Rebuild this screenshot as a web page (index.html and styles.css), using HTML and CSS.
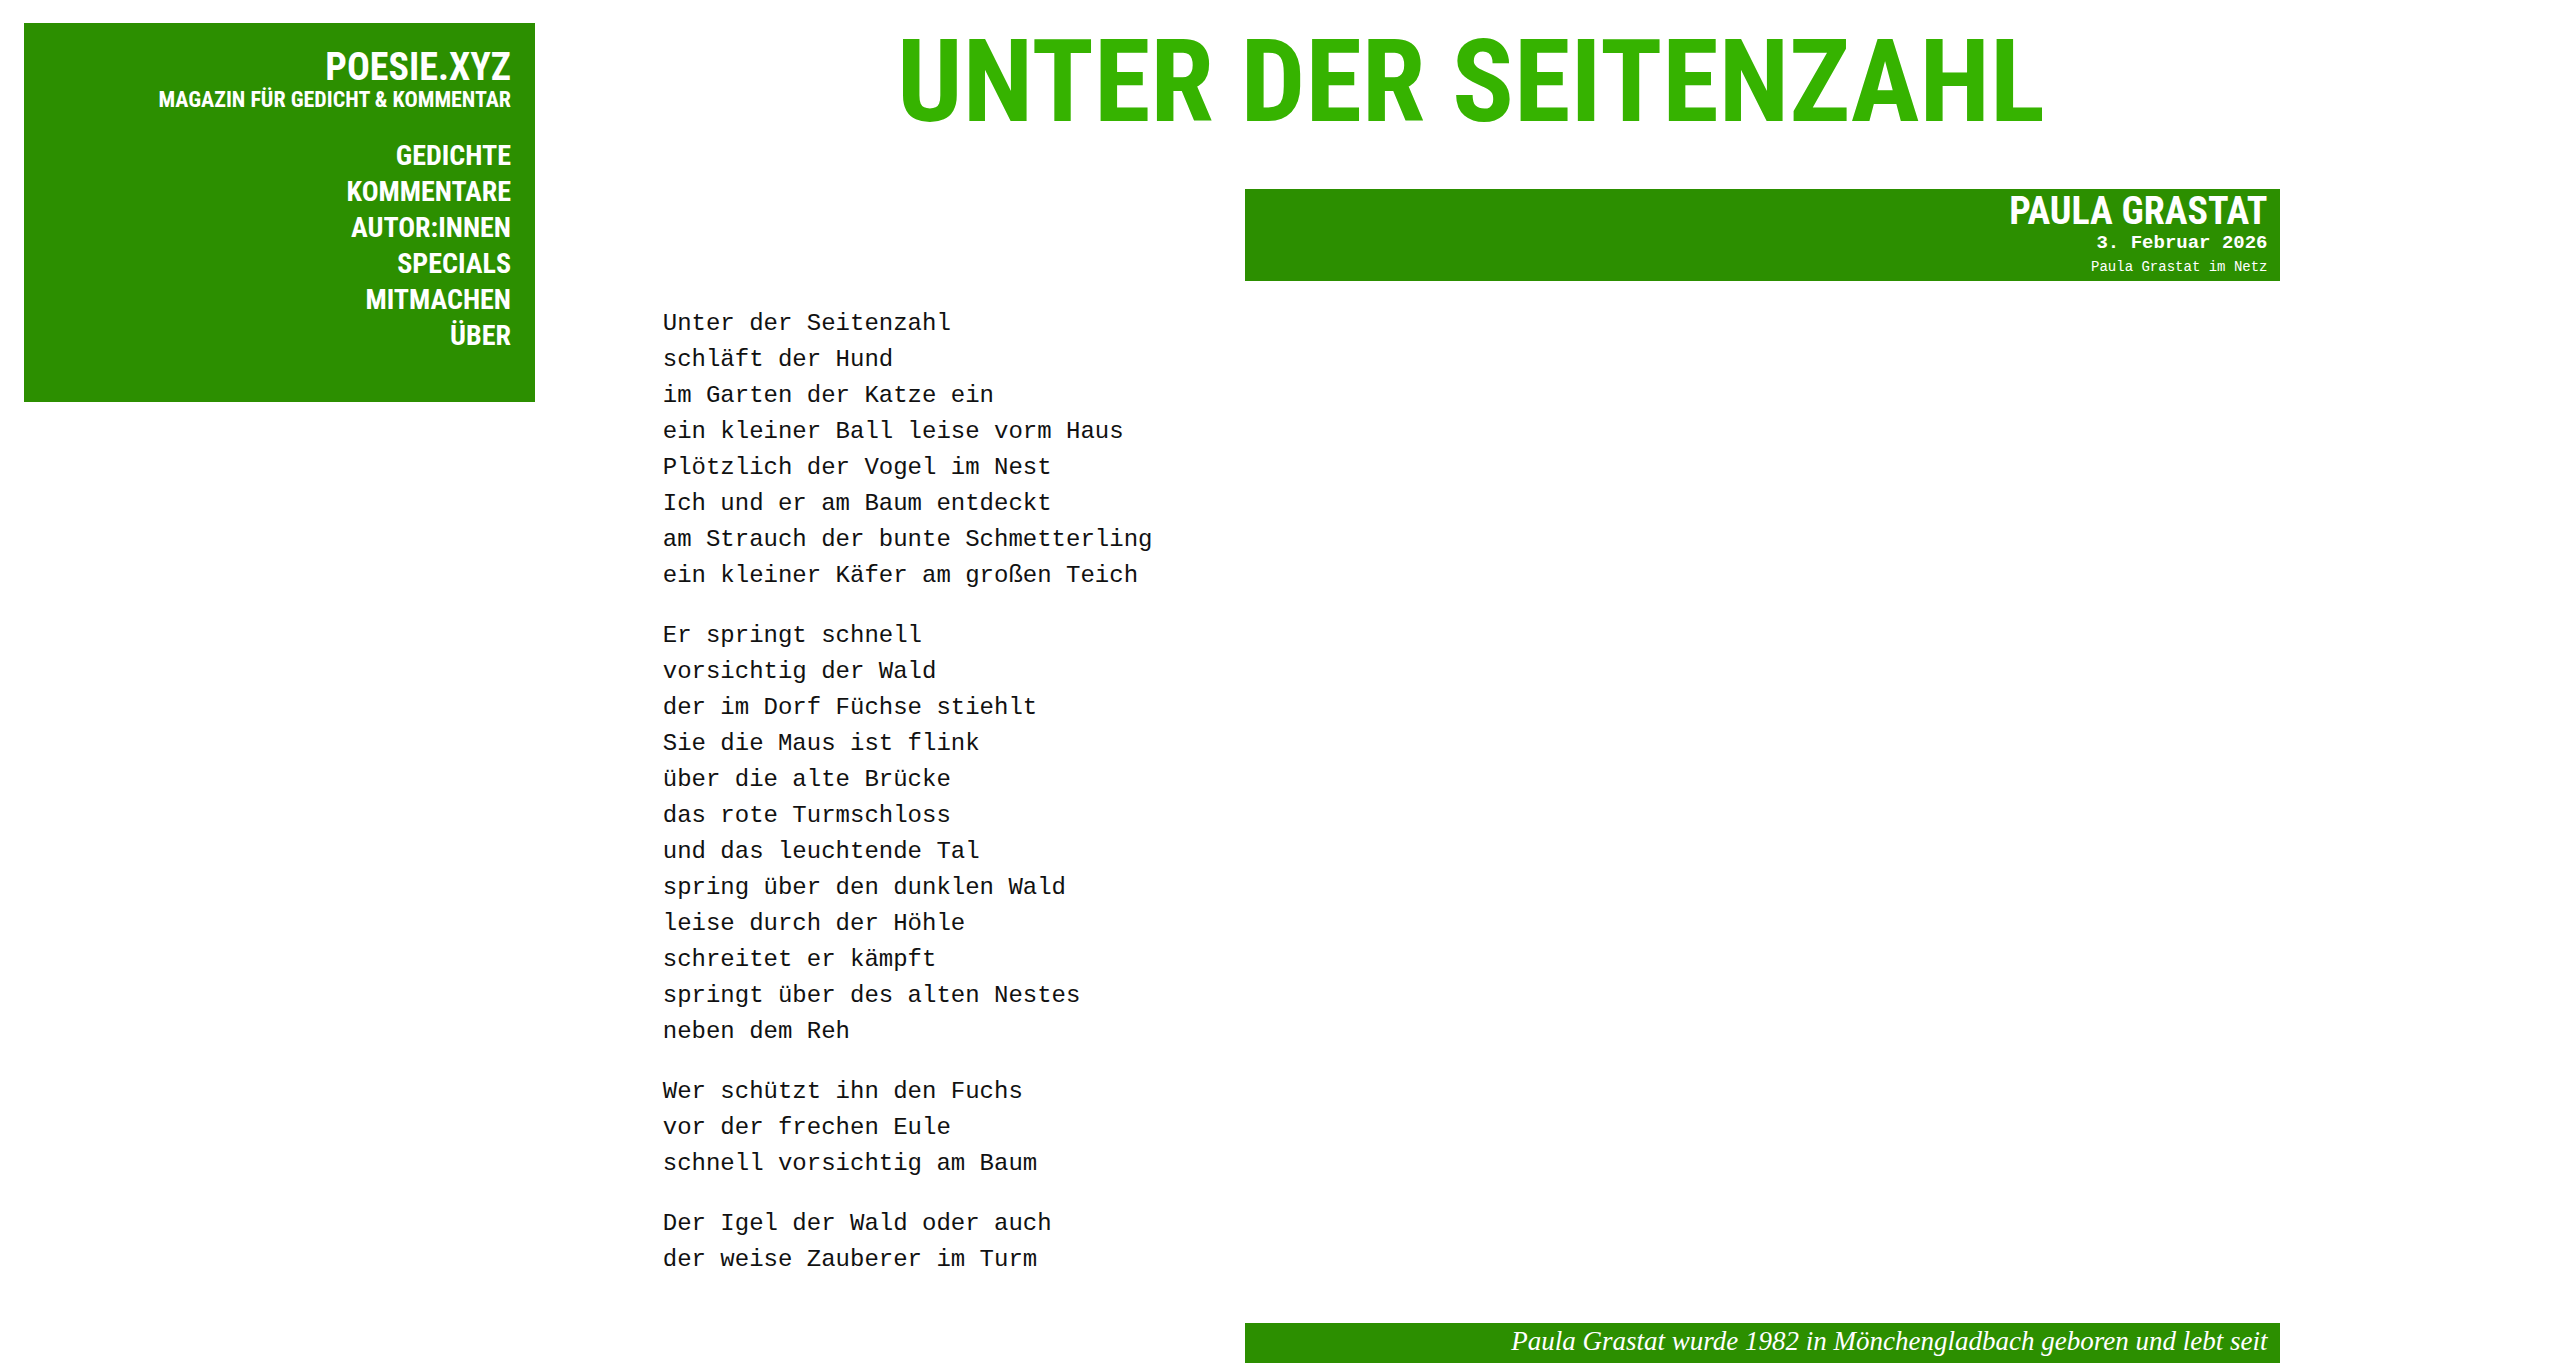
FILE: index.html
```html
<!DOCTYPE html>
<html lang="de">
<head>
  <meta charset="UTF-8">
  <meta name="viewport" content="width=device-width, initial-scale=1.0">
  <title>Unter der Seitenzahl</title>
  <link rel="stylesheet" href="styles.css">
</head>
<body>
  <div class="page">
    <header class="sidebar">
      <a class="logo" href="#">POESIE.XYZ</a>
      <p class="tagline">MAGAZIN FÜR GEDICHT &amp; KOMMENTAR</p>
      <nav class="menu">
        <a href="#">GEDICHTE</a>
        <a href="#">KOMMENTARE</a>
        <a href="#">AUTOR:INNEN</a>
        <a href="#">SPECIALS</a>
        <a href="#">MITMACHEN</a>
        <a href="#">ÜBER</a>
      </nav>
    </header>

    <main class="content">
      <h1>UNTER DER SEITENZAHL</h1>

      <div class="author">
        <a class="author-name" href="#">PAULA GRASTAT</a>
        <time datetime="2026-02-03">3. Februar 2026</time>
        <a class="author-link" href="#">Paula Grastat im Netz</a>
      </div>

      <article class="poem">
        <p>Unter der Seitenzahl<br>
        schläft der Hund<br>
        im Garten der Katze ein<br>
        ein kleiner Ball leise vorm Haus<br>
        Plötzlich der Vogel im Nest<br>
        Ich und er am Baum entdeckt<br>
        am Strauch der bunte Schmetterling<br>
        ein kleiner Käfer am großen Teich</p>

        <p>Er springt schnell<br>
        vorsichtig der Wald<br>
        der im Dorf Füchse stiehlt<br>
        Sie die Maus ist flink<br>
        über die alte Brücke<br>
        das rote Turmschloss<br>
        und das leuchtende Tal<br>
        spring über den dunklen Wald<br>
        leise durch der Höhle<br>
        schreitet er kämpft<br>
        springt über des alten Nestes<br>
        neben dem Reh</p>

        <p>Wer schützt ihn den Fuchs<br>
        vor der frechen Eule<br>
        schnell vorsichtig am Baum</p>

        <p>Der Igel der Wald oder auch<br>
        der weise Zauberer im Turm</p>
      </article>

      <footer class="bio">Paula Grastat wurde 1982 in Mönchengladbach geboren und lebt seit</footer>
    </main>
  </div>
</body>
</html>
```

FILE: styles.css
```css
* {
  box-sizing: border-box;
}

body {
  margin: 0;
  background: #fff;
  color: #111;
  font-family: "Liberation Mono", monospace;
  font-size: 24px;
  line-height: 36px;
}

a {
  color: inherit;
  text-decoration: none;
}

p,
h1 {
  margin: 0;
}

.page {
  display: grid;
  grid-template-columns: 20vw 1fr;
  column-gap: 5vw;
  align-items: start;
  padding: 23px calc(10vw + 20px) 0 24px;
}

.sidebar,
.author,
.bio {
  background: #2c8f00;
  color: #fff;
  text-align: right;
}

.sidebar,
.author-name,
h1 {
  font-family: "Roboto Condensed", "Liberation Sans", sans-serif;
  font-weight: bold;
}

.sidebar {
  padding: 23px 24px 48px;
}

.logo {
  display: block;
  font-size: 38px;
  line-height: 42px;
}

.tagline {
  font-size: 22px;
  line-height: 24px;
}

.menu {
  display: flex;
  flex-direction: column;
  align-items: flex-end;
  padding-top: 26px;
  font-size: 28px;
}

.content {
  display: flex;
  flex-direction: column;
}

h1 {
  color: #36b300;
  font-size: 115px;
  line-height: 118px;
  text-align: center;
}

.author,
.bio {
  align-self: flex-end;
  width: 64%;
  padding: 2px 12px;
}

.author {
  display: flex;
  flex-direction: column;
  align-items: flex-end;
  margin-top: 48px;
  line-height: 24px;
}

.author-name {
  font-size: 38px;
  line-height: 40px;
}

.author time {
  font-size: 19px;
  font-weight: bold;
}

.author-link {
  font-size: 14px;
}

.poem {
  display: flex;
  flex-direction: column;
  gap: 24px;
  padding: 25px 0 45px;
}

.bio {
  padding: 0 12px 4px;
  font-family: "Liberation Serif", serif;
  font-size: 27px;
  font-style: italic;
}
```
